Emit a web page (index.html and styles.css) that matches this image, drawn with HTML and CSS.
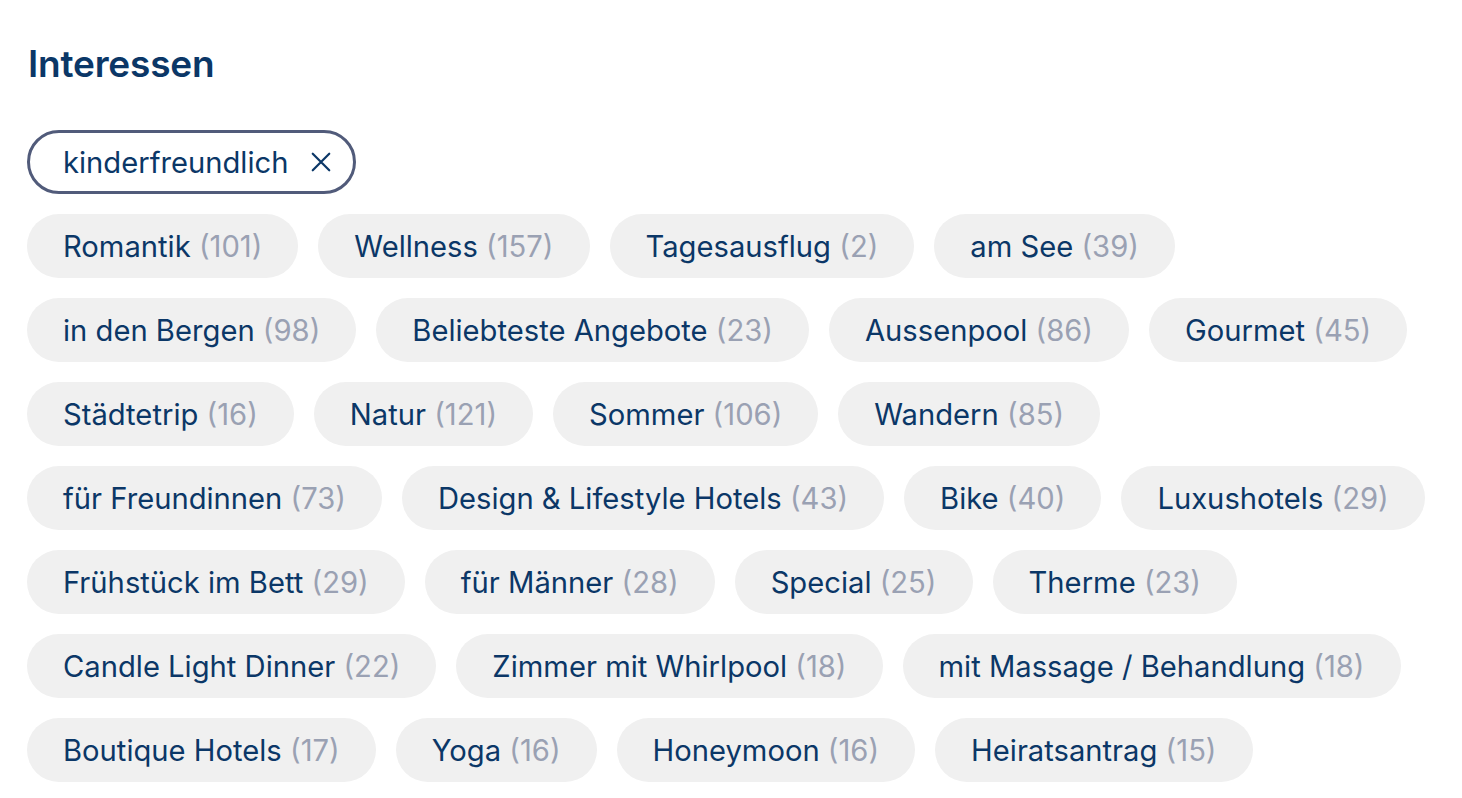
FILE: index.html
```html
<!DOCTYPE html>
<html lang="de">
<head>
<meta charset="utf-8">
<title>Interessen</title>
<link rel="stylesheet" href="styles.css">
</head>
<body>
<section class="interests">
  <h2 class="title">Interessen</h2>
  <div class="chips">
    <div class="row">
      <button class="chip chip-active"><span>kinderfreundlich</span><svg class="close" viewBox="0 0 24 24" width="22" height="22"><path d="M3 3L21 21M21 3L3 21" stroke="currentColor" stroke-width="2.4" stroke-linecap="round" fill="none"/></svg></button>
    </div>
    <div class="row">
      <button class="chip">Romantik <span class="count">(101)</span></button>
      <button class="chip">Wellness <span class="count">(157)</span></button>
      <button class="chip">Tagesausflug <span class="count">(2)</span></button>
      <button class="chip">am See <span class="count">(39)</span></button>
    </div>
    <div class="row">
      <button class="chip">in den Bergen <span class="count">(98)</span></button>
      <button class="chip">Beliebteste Angebote <span class="count">(23)</span></button>
      <button class="chip">Aussenpool <span class="count">(86)</span></button>
      <button class="chip">Gourmet <span class="count">(45)</span></button>
    </div>
    <div class="row">
      <button class="chip">Städtetrip <span class="count">(16)</span></button>
      <button class="chip">Natur <span class="count">(121)</span></button>
      <button class="chip">Sommer <span class="count">(106)</span></button>
      <button class="chip">Wandern <span class="count">(85)</span></button>
    </div>
    <div class="row">
      <button class="chip">für Freundinnen <span class="count">(73)</span></button>
      <button class="chip">Design &amp; Lifestyle Hotels <span class="count">(43)</span></button>
      <button class="chip">Bike <span class="count">(40)</span></button>
      <button class="chip">Luxushotels <span class="count">(29)</span></button>
    </div>
    <div class="row">
      <button class="chip">Frühstück im Bett <span class="count">(29)</span></button>
      <button class="chip">für Männer <span class="count">(28)</span></button>
      <button class="chip">Special <span class="count">(25)</span></button>
      <button class="chip">Therme <span class="count">(23)</span></button>
    </div>
    <div class="row">
      <button class="chip">Candle Light Dinner <span class="count">(22)</span></button>
      <button class="chip">Zimmer mit Whirlpool <span class="count">(18)</span></button>
      <button class="chip">mit Massage / Behandlung <span class="count">(18)</span></button>
    </div>
    <div class="row">
      <button class="chip">Boutique Hotels <span class="count">(17)</span></button>
      <button class="chip">Yoga <span class="count">(16)</span></button>
      <button class="chip">Honeymoon <span class="count">(16)</span></button>
      <button class="chip">Heiratsantrag <span class="count">(15)</span></button>
    </div>
  </div>
</section>
</body>
</html>
```
FILE: styles.css
```css
* { box-sizing: border-box; }
body {
  margin: 0;
  background: #ffffff;
  font-family: Inter, "Noto Sans", sans-serif;
  color: #0b3767;
}
.interests {
  padding: 40px 20px 0 27px;
}
.title {
  margin: 0 0 0 1px;
  font-size: 37px;
  font-weight: 600;
  line-height: 48px;
  color: #0b3767;
  letter-spacing: -0.2px;
}
.chips {
  display: flex;
  flex-direction: column;
  gap: 20px;
  margin-top: 42px;
}
.row {
  display: flex;
  gap: 20px;
}
.chip {
  height: 64px;
  padding: 0 36px;
  border: none;
  border-radius: 32px;
  background: #f0f0f0;
  font-family: inherit;
  font-size: 29.2px;
  font-weight: 400;
  color: #0b3767;
  display: inline-flex;
  align-items: center;
  white-space: pre;
}
.count { color: #9aa1b3; }
.chip-active {
  background: #ffffff;
  border: 3px solid #515b7a;
  padding: 0 21px 0 33px;
  gap: 22px;
}
.close { color: #0b3767; }
```
